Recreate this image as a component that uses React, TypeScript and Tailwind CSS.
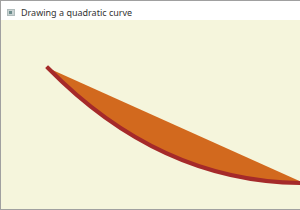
export default function App() {
  return (
    <div className="w-[300px] h-[210px] flex flex-col border border-[#a0a0a0] border-r-0 bg-white overflow-hidden" style={{ fontFamily: '"Noto Sans", "Open Sans", sans-serif' }}>
      <div className="h-[19px] flex items-center shrink-0 bg-white pl-[6px] pt-[3px]">
        <div className="w-[8px] h-[7px] bg-[#c9d3d3] border border-[#b0bcbc] flex items-center justify-start">
          <div className="w-[3px] h-[3px] bg-[#6c8c8c] ml-[1px]" />
        </div>
        <span className="ml-[6px] text-[9px] leading-none text-[#333]">Drawing a quadratic curve</span>
      </div>
      <div className="flex-1 bg-[#f5f5dc] relative">
        <svg width="300" height="190" className="block">
          <path
            d="M47 48 Q160 163 303 163"
            fill="#d2691e"
            stroke="#a52a2a"
            strokeWidth="4"
            strokeLinecap="square"
          />
        </svg>
      </div>
    </div>
  );
}
